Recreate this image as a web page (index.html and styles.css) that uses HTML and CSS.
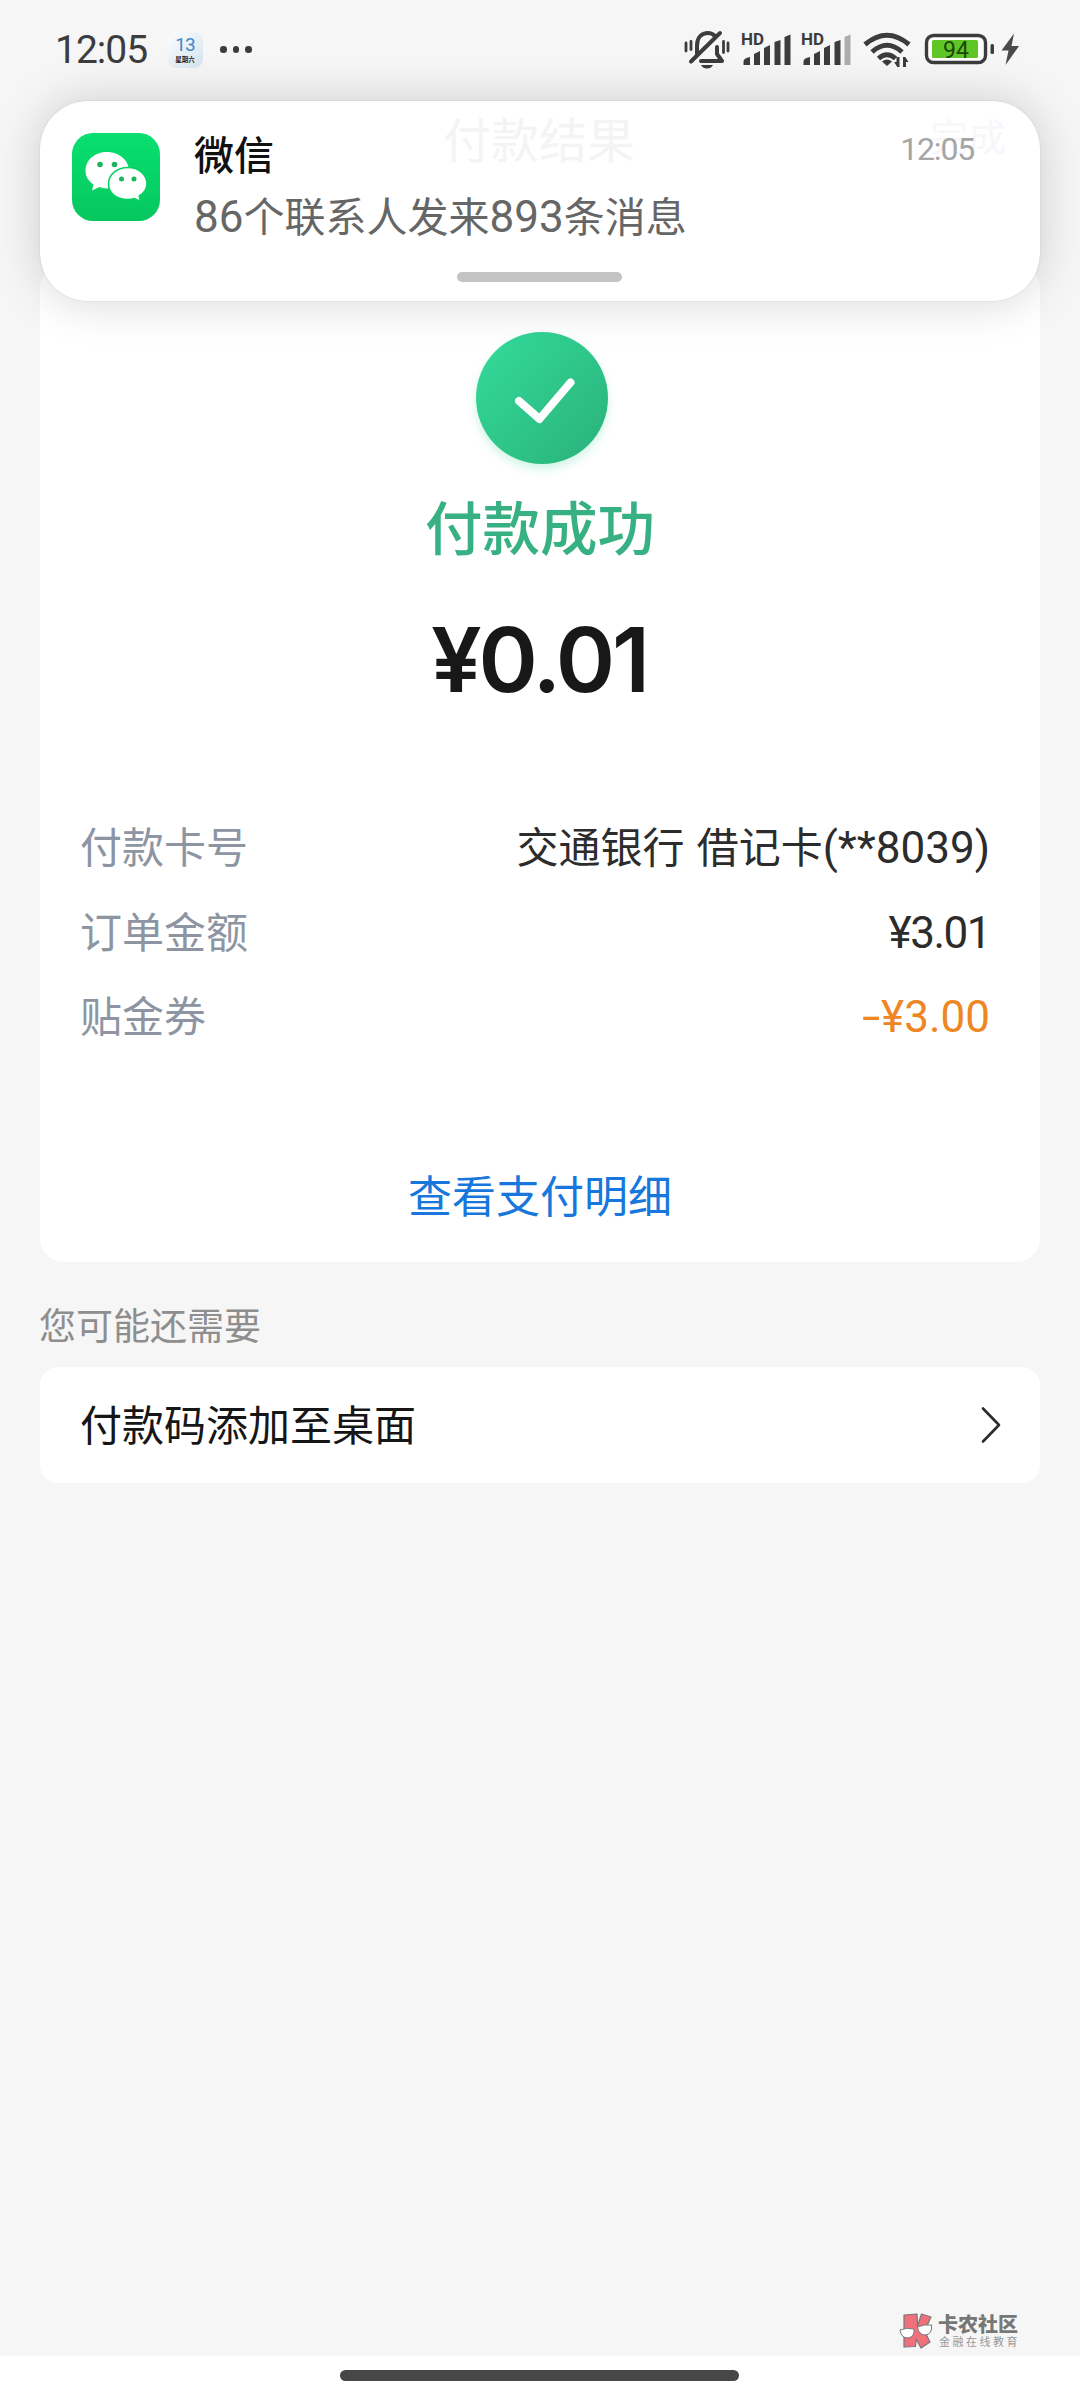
FILE: index.html
```html
<!DOCTYPE html>
<html lang="zh-CN">
<head>
<meta charset="utf-8">
<title>付款结果</title>
<link rel="stylesheet" href="styles.css">
</head>
<body>
<div class="screen">
  <header class="status">
    <span class="clock">12:05</span>
    <span class="cal"><b class="cal-day">13</b><span class="cal-week">星期六</span></span>
    <span class="dots"><i></i><i></i><i></i></span>
    <svg class="sys" width="340" height="44" viewBox="680 27 340 44">
      <g fill="none" stroke="#3c3c3c" stroke-width="4" stroke-linecap="round" stroke-linejoin="round">
        <path d="M697 54V46C697 37 702 33 708 33Q712 33 715 36"/>
        <path d="M691 61.500L720 33"/>
        <path d="M701 61H722L717 54V47"/>
        <path stroke-width="2.800" d="M686 43v8M691 41.500v8M723.500 41.500v11M728 43v8"/>
      </g>
      <path fill="#3c3c3c" d="M701 65h12q-2 3.500-6 3.500t-6-3.500z"/>
      <text class="hd" x="741" y="45" textLength="23" lengthAdjust="spacingAndGlyphs">HD</text>
      <text class="hd" x="801" y="45" textLength="23" lengthAdjust="spacingAndGlyphs">HD</text>
      <g fill="#3c3c3c">
        <path d="M743.500 65v-3q0-3 3-4l3.500-1v8z"/><path d="M754 65V54l6-3v14zM764 65V48l6-3v20zM774.500 65V42l6-2v25zM784.500 65V37l6-2.500V65z"/>
        <path d="M803.500 65v-3q0-3 3-4l3.500-1v8z"/><path d="M814 65V54l6-3v14zM824 65V48l6-3v20zM834.500 65V42l6-2v25z"/>
        <path fill="#adadad" d="M844.500 65V37l6-2.500V65z"/>
      </g>
      <g fill="none" stroke="#3c3c3c" stroke-width="5">
        <path d="M865 44.500Q887 26 909 44.500"/><path d="M872 52Q887 38.500 902 52"/><path d="M878.500 58.500Q887 51 895.500 58.500"/>
      </g>
      <path fill="#3c3c3c" d="M882 61.500q5-4 10 0l-5 4.500z"/>
      <path fill="#3c3c3c" d="M899.500 57v10h-2.300l-3-5h2.300v-5zM903 67V57h2.300l3.200 5H906v5z"/>
      <rect x="926.500" y="35.500" width="59" height="27" rx="7" fill="#fff" stroke="#3c3c3c" stroke-width="3.400"/>
      <rect x="932" y="40" width="46" height="18" rx="1.500" fill="#5fc626"/>
      <text class="pct" x="943" y="58" textLength="26">94</text>
      <rect x="990.500" y="44" width="3.500" height="10" rx="1.500" fill="#3c3c3c"/>
      <path fill="#4a4a4a" d="M1014 33.500l-12.500 17h7l-3 14.500 13.500-19H1011.500z"/>
    </svg>
  </header>

  <section class="notice">
    <svg class="wechat" width="88" height="88" viewBox="0 0 88 88">
      <defs><linearGradient id="wg" x1="0" y1="0" x2="0" y2="1"><stop offset="0" stop-color="#08e070"/><stop offset="1" stop-color="#06c75e"/></linearGradient></defs>
      <rect width="88" height="88" rx="21" fill="url(#wg)"/>
      <path fill="#fff" d="M35 19C23 19 13.500 27 13.500 37.500c0 6 3 10.500 8 14L20 57.500l7.500-3.500q4 1.500 8.500 1.500C48 55.500 57 47.500 57 37.500S47 19 35 19z"/>
      <path fill="#fff" stroke="#06d264" stroke-width="1.600" d="M56 34.500C45 34.500 36.500 41.500 36.500 51S45 66.500 56 66.500q3.500 0 6.500-1l6 3-1.200-5.500C72 60 75 56 75 51c0-9.500-8.500-16.500-19-16.500z"/>
      <g fill="#1eb35f"><circle cx="28" cy="31.500" r="2.800"/><circle cx="42.500" cy="31.500" r="2.800"/><circle cx="49.500" cy="46" r="2.500"/><circle cx="62" cy="46" r="2.500"/></g>
    </svg>
    <div class="notice-body">
      <div class="notice-title">微信</div>
      <div class="notice-text"><span class="num">86</span>个联系人发来<span class="num">893</span>条消息</div>
    </div>
    <time class="notice-time">12:05</time>
    <span class="ghost ghost-title">付款结果</span>
    <span class="ghost ghost-done">完成</span>
    <i class="handle"></i>
  </section>

  <main class="pay">
    <svg class="ok" width="160" height="160" viewBox="0 0 160 160">
      <defs><linearGradient id="og" x1="0.100" y1="0.200" x2="0.850" y2="0.900"><stop offset="0" stop-color="#32d696"/><stop offset="1" stop-color="#2bb67e"/></linearGradient></defs>
      <circle class="ok-disc" cx="80" cy="80" r="66" fill="url(#og)"/>
      <path d="M57 83L77.500 101L108.500 64.500" fill="none" stroke="#fff" stroke-width="8" stroke-linecap="round" stroke-linejoin="round"/>
    </svg>
    <h1 class="result">付款成功</h1>
    <div class="amount">¥0.01</div>
    <dl class="rows">
      <div class="row"><dt>付款卡号</dt><dd class="card-no">交通银行 借记卡<span class="num">(**8039)</span></dd></div>
      <div class="row"><dt>订单金额</dt><dd class="total"><span class="num">¥3.01</span></dd></div>
      <div class="row"><dt>贴金券</dt><dd class="minus"><span class="num"><span class="sign">-</span>¥3.00</span></dd></div>
    </dl>
    <a class="detail">查看支付明细</a>
  </main>

  <h2 class="more">您可能还需要</h2>
  <a class="entry"><span>付款码添加至桌面</span>
    <svg width="22" height="40" viewBox="0 0 22 40"><path d="M3 3.500L19 20L3 36.500" fill="none" stroke="#2b2b2b" stroke-width="2.600" stroke-linecap="round" stroke-linejoin="round"/></svg>
  </a>

  <div class="brand">
    <svg width="36" height="36" viewBox="0 0 36 36">
      <path fill="#f0707c" stroke="#777" stroke-width="1.200" stroke-linejoin="round" d="M5 2l13-1 .5 12L22.500 1 32 4l-6.500 14L31 29l-9 6-5-9-.5 7.500L5 34z"/>
      <path fill="#fff" stroke="#777" stroke-width="1" d="M1 17q7-3 14-1 1 8-6 9Q2 25 1 17zM18.500 14q7-3 14-2 1 9-6 10-7 0-8-8z"/>
    </svg>
    <div class="brand-text"><strong>卡农社区</strong><small>金融在线教育</small></div>
  </div>
  <footer class="home"><i></i></footer>
</div>
</body>
</html>
```

FILE: styles.css
```css
* { box-sizing: border-box; }
body { margin: 0; background: #f6f6f6; font-family: "Noto Sans CJK SC", sans-serif; }
h1, h2, dl, dd { margin: 0; }
.screen { width: 1080px; height: 2400px; display: flex; flex-direction: column; background: #f6f6f6; overflow: hidden; }
.num { font-family: Roboto, "Noto Sans CJK SC", sans-serif; }

.status { height: 101px; flex: none; display: flex; align-items: flex-start; padding: 27px 60px 0 55px; }
.clock { font: 400 39px/44px Roboto, sans-serif; color: #3c3c3c; width: 112px; letter-spacing: -1px; padding-top: 1px; }
.cal { width: 36px; height: 36px; margin-top: 5px; border-radius: 9px; background: linear-gradient(135deg, #fdfdfd, #d4e3ee); display: flex; flex-direction: column; align-items: center; }
.cal-day { font: 400 19px/18px Roboto, sans-serif; letter-spacing: -1px; color: #3f86cc; padding-top: 4px; }
.cal-week { font-size: 6.500px; line-height: 10px; font-weight: 700; color: #222; }
.dots { display: flex; gap: 6px; margin: 19px 0 0 17px; }
.dots i { width: 6.500px; height: 6.500px; border-radius: 50%; background: #3c3c3c; }
.sys { margin-left: auto; }
.hd { font: 700 17px Roboto, sans-serif; fill: #3c3c3c; }
.pct { font: 400 23px Roboto, sans-serif; fill: #1c4708; }

.notice { position: relative; z-index: 2; flex: none; height: 200px; margin: 0 40px; padding: 32px 66px 0 32px; border-radius: 48px; background: #fff; box-shadow: 0 0 48px rgba(0,0,0,.17), 0 0 2px rgba(0,0,0,.12); display: flex; align-items: flex-start; }
.notice-body { margin: -3px 0 0 34px; flex: 1; }
.notice-title { font-size: 40px; line-height: 46px; font-weight: 500; color: #111; }
.notice-text { font-size: 41px; line-height: 48px; margin-top: 14px; color: #666; white-space: nowrap; }
.notice-text .num { font-size: 44px; line-height: 40px; }
.notice-time { font: 400 32px/34px Roboto, sans-serif; letter-spacing: -1.200px; margin-top: -1px; color: #a5a5a5; }
.ghost { position: absolute; color: #f4f4f4; white-space: nowrap; z-index: -1; }
.ghost-title { left: 403px; top: 8px; font-size: 48px; line-height: 56px; }
.ghost-done { left: 890px; top: 9px; font-size: 38px; line-height: 50px; color: #f7f7fb; }
.handle { position: absolute; left: 417px; top: 171px; width: 165px; height: 10px; border-radius: 5px; background: #c3c3c3; }

.pay { flex: none; height: 997px; margin: -36px 40px 0; padding: 53px 40px 0; border-radius: 24px; background: #fff; display: flex; flex-direction: column; align-items: center; }
.ok { margin-left: 4px; }
.ok-disc { filter: drop-shadow(0 5px 5px rgba(60,215,150,.25)); }
.result { font-size: 57.500px; line-height: 64px; font-weight: 500; color: #37b183; margin-top: 15px; }
.amount { font: 600 90px/100px Inter, sans-serif; color: #181818; margin: 53px 2px 0 0; letter-spacing: -3px; }
.rows { align-self: stretch; margin: 93px 10px 0 0; font-size: 42px; }
.row { height: 84.500px; line-height: 84px; display: flex; justify-content: space-between; white-space: nowrap; }
dt { color: #8d95a3; }
dd { color: #2c2c2c; }
.row .num { font-size: 44px; line-height: 40px; }
.card-no { word-spacing: 3px; }
.total { letter-spacing: -1.500px; }
.minus { color: #ee8623; }
.sign { display: inline-block; transform: scaleX(1.500); margin-right: 4px; }
.detail { font-size: 44px; line-height: 60px; color: #1877dc; margin-top: 107px; }

.more { font-size: 37px; line-height: 50px; font-weight: 400; color: #8e8e8e; margin: 37px 40px 0 39px; }
.entry { height: 116px; margin: 18px 40px 0; padding: 0 38px 0 40px; border-radius: 18px; background: #fff; display: flex; align-items: center; justify-content: space-between; font-size: 42px; color: #161616; }
.entry span { padding-bottom: 5px; }

.brand { display: flex; align-items: center; gap: 3px; margin: auto 60px 7px auto; }
.brand-text { display: flex; flex-direction: column; color: #777; }
.brand-text strong { font-size: 20px; line-height: 21px; font-weight: 900; }
.brand-text small { font-size: 11px; line-height: 15px; letter-spacing: 2.500px; padding-left: 1px; color: #999; }
.home { height: 44px; flex: none; background: #fff; display: flex; justify-content: center; padding: 14px 1px 0 0; }
.home i { width: 399px; height: 11px; border-radius: 6px; background: #474747; }
```
